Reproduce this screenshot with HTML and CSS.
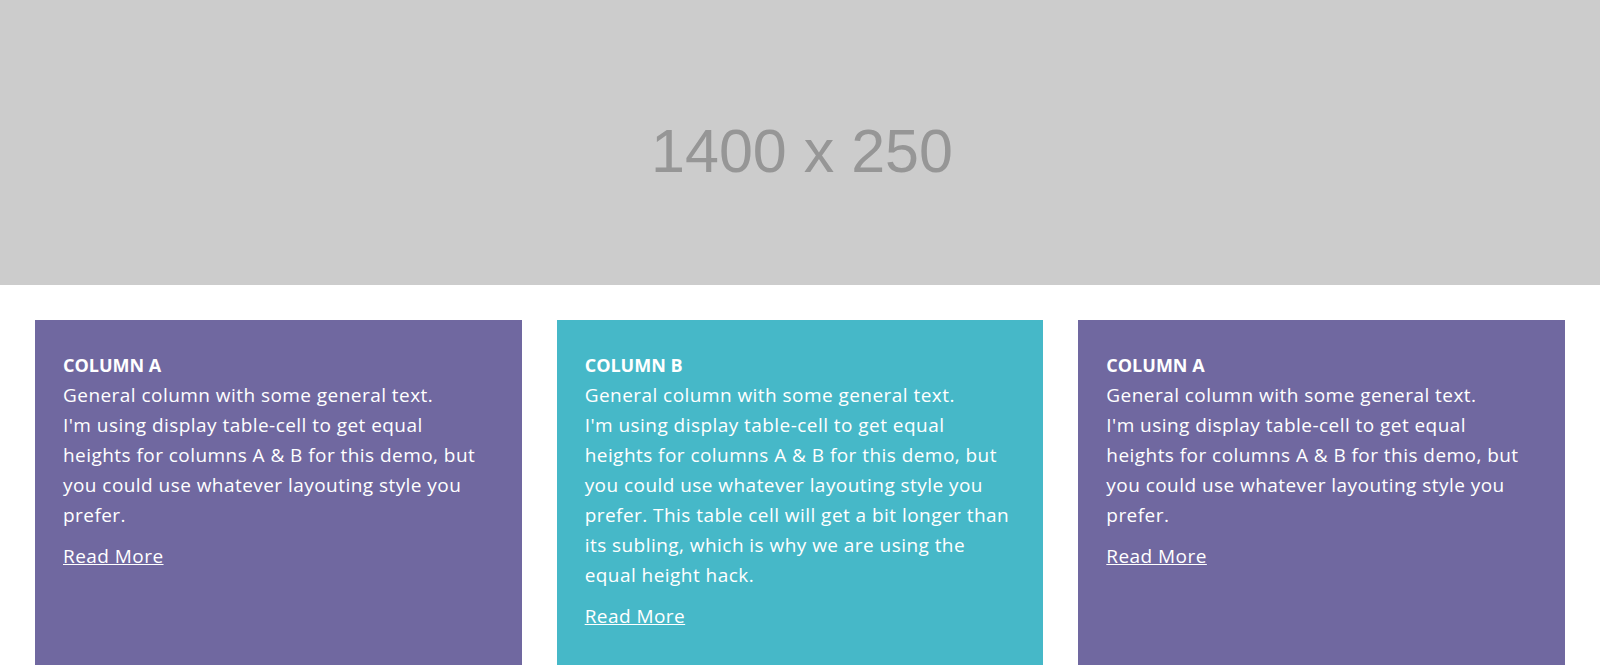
FILE: index.html
```html
<!DOCTYPE html>
<html lang="en">
<head>
    <meta charset="UTF-8">
    <meta name="viewport" content="width=device-width, initial-scale=1.0">
    <title>Equal height columns</title>
    <link rel="stylesheet" href="styles.css">
</head>
<body>
    <div class="banner">1400 x 250</div>

    <div class="colunas">
        <div class="coluna coluna-a">
            <strong>COLUMN A</strong>
            <p>General column with some general text.<br>I'm using display table-cell to get equal heights for columns A &amp; B for this demo, but you could use whatever layouting style you prefer.</p>
            <a href="#">Read More</a>
        </div>
        <div class="coluna coluna-b">
            <strong>COLUMN B</strong>
            <p>General column with some general text.<br>I'm using display table-cell to get equal heights for columns A &amp; B for this demo, but you could use whatever layouting style you prefer. This table cell will get a bit longer than its subling, which is why we are using the equal height hack.</p>
            <a href="#">Read More</a>
        </div>
        <div class="coluna coluna-a">
            <strong>COLUMN A</strong>
            <p>General column with some general text.<br>I'm using display table-cell to get equal heights for columns A &amp; B for this demo, but you could use whatever layouting style you prefer.</p>
            <a href="#">Read More</a>
        </div>
    </div>
</body>
</html>
```
FILE: styles.css
```css
/* Estilos gerais */
body {
    margin: 0;
    font-family: "Open Sans", sans-serif;
    color: #ffffff;
    background: #ffffff;
}

.banner {
    height: 285px;
    box-sizing: border-box;
    padding: 16px 0 0 4px;
    background-color: #cccccc;
    color: #969696;
    font-family: "Liberation Sans", Arial, sans-serif;
    font-size: 61px;
    display: flex;
    align-items: center;
    justify-content: center;
}

/* Colunas com altura igual */
.colunas {
    display: table;
    width: 100%;
    table-layout: fixed;
    border-spacing: 35px;
}

.coluna {
    display: table-cell;
    padding: 30px 28px 80px;
    font-size: 19px;
    letter-spacing: 0.45px;
    line-height: 30px;
}

.coluna-a {
    background-color: #7068a0;
}

.coluna-b {
    background-color: #46b8c8;
}

.coluna strong {
    display: block;
    font-size: 18px;
    letter-spacing: 0;
}

.coluna p {
    margin: 0 0 11px;
}

.coluna a {
    color: #ffffff;
    text-decoration: underline;
}
```
